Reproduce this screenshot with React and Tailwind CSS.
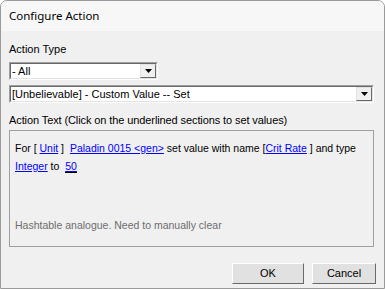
import React from "react";

function Arrow() {
  return (
    <svg width="7" height="4" viewBox="0 0 7 4">
      <path d="M0 0h7L3.5 4z" fill="#000" />
    </svg>
  );
}

function Combo({ value, width }) {
  return (
    <div
      className={`flex h-[18px] ${width} border border-t-[#a0a0a0] border-l-[#a0a0a0] border-r-white border-b-white`}
    >
      <div className="flex flex-1 border border-t-[#696969] border-l-[#696969] border-r-[#e3e3e3] border-b-[#e3e3e3] bg-white">
        <div className="flex-1 pl-[1px] leading-[14px] text-black">{value}</div>
        <div className="flex w-[16px] items-center justify-center border border-t-[#e3e3e3] border-l-[#e3e3e3] border-r-[#696969] border-b-[#696969] bg-[#f0f0f0]">
          <Arrow />
        </div>
      </div>
    </div>
  );
}

function Link({ children, focus }) {
  return (
    <span
      className={
        focus
          ? "text-[#0000ff] underline decoration-[#0000ff] border-b border-black"
          : "text-[#0000ff] underline decoration-[#0000ff]"
      }
    >
      {children}
    </span>
  );
}

export default function App() {
  return (
    <div
      className="flex h-[289px] w-[385px] flex-col overflow-hidden rounded-t-[7px] border border-[#9a9a9a] bg-[#f0f0f0] text-[11px]"
      style={{ fontFamily: "Tahoma, 'Liberation Sans', Arial, sans-serif" }}
    >
      <div
        className="flex h-[30px] items-center bg-[#f7f7f7] pl-[8px] text-[11.5px] text-black"
        style={{ fontFamily: "'Segoe UI', 'Noto Sans', sans-serif" }}
      >
        Configure Action
      </div>
      <div className="flex flex-1 flex-col px-[8px]">
        <div className="mt-[11px] h-[14px] leading-[14px]">Action Type</div>
        <div className="mt-[6px]">
          <Combo value="- All" width="w-[149px]" />
        </div>
        <div className="mt-[5px]">
          <Combo value="[Unbelievable] - Custom Value -- Set" width="w-[365px]" />
        </div>
        <div className="mt-[10px] h-[14px] leading-[14px] tracking-[-0.1px]">
          Action Text (Click on the underlined sections to set values)
        </div>
        <div className="mt-[3px] flex h-[117px] w-[365px] flex-col border border-[#a0a0a0] px-[5px] pt-[8px] text-[10.5px]">
          <div className="leading-[18px]">
            For [ <Link>Unit</Link> ]&nbsp; <Link>Paladin 0015 &lt;gen&gt;</Link> set value with name [
            <Link>Crit Rate</Link> ] and type <Link>Integer</Link> to&nbsp; <Link focus>50</Link>
          </div>
          <div className="mt-auto mb-[12px] text-[#6d6d6d]">Hashtable analogue. Need to manually clear</div>
        </div>
        <div className="mt-[16px] flex justify-end gap-[8px]">
          <button className="h-[21px] w-[72px] border border-t-white border-l-white border-r-[#696969] border-b-[#696969] bg-[#e1e1e1] text-black">
            OK
          </button>
          <button className="h-[21px] w-[64px] border border-t-white border-l-white border-r-[#696969] border-b-[#696969] bg-[#e1e1e1] text-black">
            Cancel
          </button>
        </div>
      </div>
    </div>
  );
}
